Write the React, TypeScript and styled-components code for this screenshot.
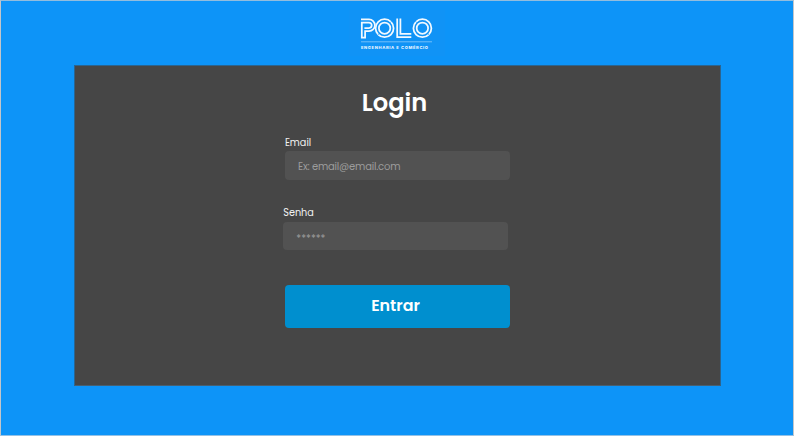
import React from 'react';
import styled, { createGlobalStyle } from 'styled-components';

const GlobalStyle = createGlobalStyle`
  *, *::before, *::after { box-sizing: border-box; }
  html, body { margin: 0; padding: 0; }
  body { font-family: Poppins, Inter, sans-serif; font-feature-settings: 'cv11'; }
`;

const Page = styled.main`
  display: flex;
  flex-direction: column;
  align-items: center;
  width: 794px;
  height: 436px;
  background: #0d94f8;
  border: 1px solid #c2c6ca;
  border-top-color: #93bddd;
  border-bottom-color: #93c1e6;
  overflow: hidden;
`;

const Header = styled.header`
  display: flex;
  justify-content: center;
  height: 64px;
  padding-top: 9px;
`;

const Logo = styled.svg`
  display: block;
  width: 96px;
  height: 46px;
  background: #1093f6;
`;

const Tagline = styled.text`
  font: 800 4.1px Inter, sans-serif;
  fill: #e4f3ff;
`;

const Card = styled.section`
  display: flex;
  flex-direction: column;
  align-items: center;
  width: 647px;
  height: 321px;
  background: #464646;
  border: 1px solid #2b648f;
  border-bottom-color: #485f70;
`;

const Title = styled.h1`
  margin: 20px 5px 0 0;
  height: 34px;
  color: #fff;
  font-size: 24.2px;
  font-weight: 600;
  line-height: 33px;
`;

const Form = styled.form`
  display: flex;
  flex-direction: column;
  width: 225px;
  margin-top: 14px;
`;

const Field = styled.label<{ $shift?: number; $gap: number }>`
  display: flex;
  flex-direction: column;
  margin-left: ${({ $shift = 0 }) => $shift}px;
  margin-bottom: ${({ $gap }) => $gap}px;
  width: 225px;
`;

const Caption = styled.span<{ $drop: number }>`
  height: 17px;
  padding: ${({ $drop }) => $drop}px 0 0 0.4px;
  color: #f1f1f1;
  font-size: 9.7px;
  line-height: 16px;
`;

const Input = styled.input<{ $height: number; $drop: number; $spacing: number }>`
  width: 100%;
  height: ${({ $height }) => $height}px;
  padding: ${({ $drop }) => $drop}px 13px 0 13.5px;
  border: 0;
  border-radius: 4px;
  outline: 0;
  background: #525252;
  color: #fff;
  font: 400 10px Poppins, Inter, sans-serif;
  font-feature-settings: 'cv11';
  letter-spacing: ${({ $spacing }) => $spacing}px;
  &::placeholder { color: #9c9c9c; opacity: 1; }
`;

const Submit = styled.button`
  width: 225px;
  height: 42.5px;
  padding: 0 3px 1.5px 0;
  border: 0;
  border-radius: 4px;
  background: #008fcf;
  color: #fff;
  font: 600 15.9px Poppins, Inter, sans-serif;
  font-feature-settings: 'cv11';
`;

function PoloLogo() {
  return (
    <Logo viewBox="349 10 96 46" role="img" aria-label="Polo Engenharia e Comércio">
      <g fill="none" stroke="#f2f9ff" strokeWidth="1.75">
        <path d="M361 19.3H369A5.9 5.9 0 0 1 369 31.1H365.1V37.6H361.8V22.6H369A2.7 2.7 0 0 1 369 28H364.4" />
        <circle cx="384.6" cy="28.2" r="9" />
        <circle cx="384.6" cy="28.2" r="5.7" />
        <path d="M397.2 18.5V37.2H411.3M400.4 18.5V33.9H411.3" />
        <circle cx="422.4" cy="28.2" r="9" />
        <circle cx="422.4" cy="28.2" r="5.7" />
      </g>
      <path d="M378.8 34L377.4 35.4M390.4 22.4L391.8 21M416.6 22.4L415.2 21M428.2 34L429.6 35.4" stroke="#1093f6" strokeWidth=".8" />
      <path d="M361 41.8H432" stroke="#8ccafa" strokeWidth=".8" />
      <Tagline x="361" y="48.6" textLength="67" lengthAdjust="spacing">
        ENGENHARIA E COMÉRCIO
      </Tagline>
    </Logo>
  );
}

export default function App() {
  return (
    <>
      <GlobalStyle />
      <Page>
        <Header>
          <PoloLogo />
        </Header>
        <Card>
          <Title>Login</Title>
          <Form onSubmit={(event) => event.preventDefault()}>
            <Field $gap={25}>
              <Caption $drop={1}>Email</Caption>
              <Input type="email" placeholder="Ex: email@email.com" $height={29} $drop={2} $spacing={-0.2} />
            </Field>
            <Field $shift={-1.7} $gap={35}>
              <Caption $drop={0}>Senha</Caption>
              <Input type="password" placeholder="******" $height={28} $drop={6} $spacing={0} />
            </Field>
            <Submit type="submit">Entrar</Submit>
          </Form>
        </Card>
      </Page>
    </>
  );
}
